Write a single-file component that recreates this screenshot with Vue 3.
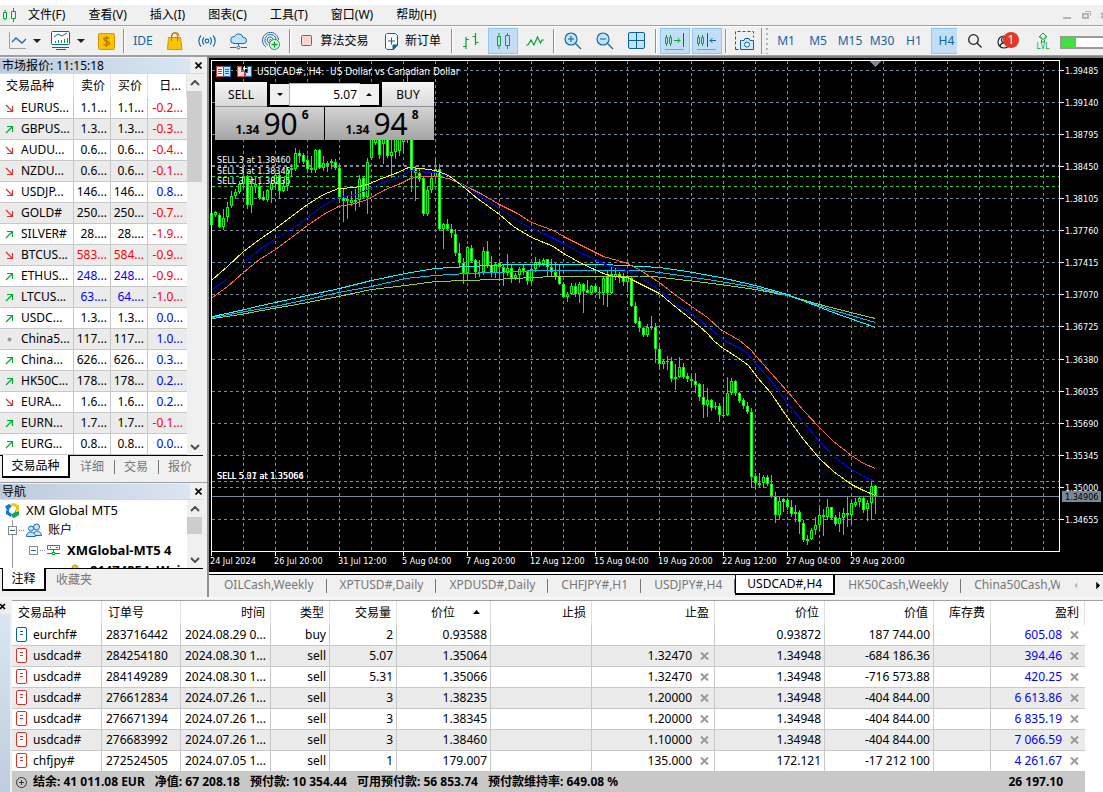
<script setup>
import { computed, ref } from 'vue'

const menus = ['文件(F)', '查看(V)', '插入(I)', '图表(C)', '工具(T)', '窗口(W)', '帮助(H)']
const frames = ['M1', 'M5', 'M15', 'M30', 'H1']

const quotes = [
  ['d', 'EURUS...', '1.1...', '1.1...', '-0.2...', ''],
  ['u', 'GBPUS...', '1.3...', '1.3...', '-0.3...', ''],
  ['d', 'AUDU...', '0.6...', '0.6...', '-0.4...', ''],
  ['d', 'NZDU...', '0.6...', '0.6...', '-0.1...', ''],
  ['d', 'USDJP...', '146...', '146...', '0.8...', ''],
  ['d', 'GOLD#', '250...', '250...', '-0.7...', ''],
  ['u', 'SILVER#', '28....', '28....', '-1.9...', ''],
  ['d', 'BTCUS...', '583...', '584...', '-0.9...', 'red'],
  ['u', 'ETHUS...', '248...', '248...', '-0.9...', 'blue'],
  ['u', 'LTCUS...', '63....', '64....', '-1.0...', 'blue'],
  ['u', 'USDC...', '1.3...', '1.3...', '0.0...', ''],
  ['n', 'China5...', '117...', '117...', '1.0...', ''],
  ['u', 'China...', '626...', '626...', '0.3...', ''],
  ['u', 'HK50C...', '178...', '178...', '0.2...', ''],
  ['d', 'EURA...', '1.6...', '1.6...', '0.2...', ''],
  ['u', 'EURN...', '1.7...', '1.7...', '-0.1...', ''],
  ['u', 'EURG...', '0.8...', '0.8...', '0.0...', '']
]

const orders = [
  ['eurchf#', '283716442', '2024.08.29 0...', 'buy', '2', '0.93588', '', '', '0.93872', '187 744.00', '605.08'],
  ['usdcad#', '284254180', '2024.08.30 1...', 'sell', '5.07', '1.35064', '', '1.32470', '1.34948', '-684 186.36', '394.46'],
  ['usdcad#', '284149289', '2024.08.30 1...', 'sell', '5.31', '1.35066', '', '1.32470', '1.34948', '-716 573.88', '420.25'],
  ['usdcad#', '276612834', '2024.07.26 1...', 'sell', '3', '1.38235', '', '1.20000', '1.34948', '-404 844.00', '6 613.86'],
  ['usdcad#', '276671394', '2024.07.26 1...', 'sell', '3', '1.38345', '', '1.20000', '1.34948', '-404 844.00', '6 835.19'],
  ['usdcad#', '276683992', '2024.07.26 1...', 'sell', '3', '1.38460', '', '1.10000', '1.34948', '-404 844.00', '7 066.59'],
  ['chfjpy#', '272524505', '2024.07.05 1...', 'sell', '1', '179.007', '', '135.000', '172.121', '-17 212 100', '4 261.67']
]
const summary = ['结余: 41 011.08 EUR', '净值: 67 208.18', '预付款: 10 354.44', '可用预付款: 56 853.74', '预付款维持率: 649.08 %']

const chartTabs = ['OILCash,Weekly', 'XPTUSD#,Daily', 'XPDUSD#,Daily', 'CHFJPY#,H1', 'USDJPY#,H4', 'USDCAD#,H4', 'HK50Cash,Weekly', 'China50Cash,Weekly']
const activeTab = ref('USDCAD#,H4')
const volume = ref('5.07')

const gridX = Array.from({ length: 26 }, (_, i) => 243 + i * 32)
const prices = ['1.39485', '1.39140', '1.38795', '1.38450', '1.38105', '1.37760', '1.37415', '1.37070', '1.36725', '1.36380', '1.36035', '1.35690', '1.35345', '1.35000', '1.34655']
  .map((label, i) => ({ label, y: 70 + i * 32 + (i > 8 ? 1 : 0) }))
const dates = ['24 Jul 2024', '26 Jul 20:00', '31 Jul 12:00', '5 Aug 04:00', '7 Aug 20:00', '12 Aug 12:00', '15 Aug 04:00', '19 Aug 20:00', '22 Aug 12:00', '27 Aug 04:00', '29 Aug 20:00']
  .map((label, i) => ({ label, x: 211 + i * 64 }))
const entries = [
  { y: 163, text: 'SELL 3 at 1.38460' },
  { y: 174, text: 'SELL 3 at 1.38345' },
  { y: 184, text: 'SELL 3 at 1.38235' },
  { y: 479, text: 'SELL 5.07 at 1.35064' },
  { y: 479, text: 'SELL 5.31 at 1.35066' }
]

// Each bar: high, body top, body bottom, low, direction, in thirds of a pixel from the block's origin
const blocks = [
  [56, `466,470,508,512,d 465,468,478,482,u 470,478,512,515,d 458,485,512,522,u 438,452,482,498,u 405,420,450,455,u 400,408,420,428,u 375,385,408,415,u 325,362,385,395,u 358,360,448,458,d 360,390,448,470,u 360,385,392,410,u 380,390,425,432,d 405,424,432,436,d 398,402,432,438,u 370,382,402,440,u 350,358,382,398,u 352,358,405,428,d 375,390,405,408,u 335,342,390,405,u 325,335,342,360,u 277,290,338,345,u 282,292,300,320,d 290,296,318,325,d 298,312,338,350,d 300,336,342,350,d 280,283,342,350,u 278,283,335,340,d 300,322,336,345,u 315,322,326,348,u 308,315,322,340,u 310,318,336,342,d 330,335,425,440,d 400,425,435,498,d 420,430,434,490,d 405,432,440,450,u 400,432,438,465,u 358,368,432,452,u 362,366,422,430,d 305,318,422,475,u 220,230,306,312,u 210,230,262,266,u 200,220,296,308,d 200,230,264,325,u 200,220,300,305,d 230,288,300,365,u 200,230,288,310,u 200,230,285,300,u 200,215,258,290,u 50,160,230,262,u 160,180,345,408,d 330,340,352,435,d 335,350,370,378,d 360,365,475,480,d 390,402,475,480,u 350,365,402,412,u 305,340,362,375,u 325,340,520,525,d 500,505,520,580,u 488,505,520,522,d 505,520,530,545,d 520,535,590,600,d 560,590,622,635,d`],
  [130, `385,400,428,462,d 348,352,428,445,u 345,355,392,398,d 388,390,425,445,d 390,425,430,440,u 350,363,425,435,u 333,363,405,415,d 378,405,428,440,d 395,402,428,445,u 395,400,412,452,d 405,412,428,468,d 372,415,428,438,u 405,415,443,458,d 430,436,444,450,u 412,416,436,460,u 405,415,424,434,d 420,424,452,465,d 405,416,452,465,u 380,395,416,425,u 388,395,402,410,u 384,390,402,408,u 388,388,412,438,d 388,412,425,440,d 400,425,438,450,d 405,438,462,466,d 455,462,502,504,d 485,492,502,516,u 458,468,492,495,u 458,468,492,500,d 455,463,492,518,u 458,463,482,548,d 450,480,488,490,d 465,468,488,492,u 458,468,487,490,d 470,486,490,508,d 440,445,490,524,u 420,442,488,530,d 410,432,488,492,u 415,432,440,450,u 425,433,445,460,d 430,442,455,468,d 435,440,455,480,u 438,443,528,530,d 515,528,580,582,d 560,574,595,605,d 590,594,614,622,d 582,590,614,620,u 558,590,593,600,d 580,592,658,698,d 645,658,703,715,d 688,694,703,718,u 678,692,695,720,u 682,694,748,755,d 702,740,748,780,u 680,710,740,745,u 700,710,740,748,d 730,738,748,755,d 730,748,753,770,d 730,753,765,790,d 760,763,802,812,d`],
  [340, `132,170,195,233,d 145,180,195,230,u 178,180,205,212,d 185,198,202,210,d 190,198,226,245,d 170,224,228,232,u 112,158,226,228,u 115,122,158,165,u 120,122,160,168,d 155,160,182,188,d 175,180,198,208,d 185,197,216,222,d 205,216,410,443,d 398,408,428,448,d 400,430,436,442,u 405,410,428,445,u 405,412,432,438,d 405,432,468,475,d 455,468,526,548,d 470,482,526,540,u 475,478,486,515,d 475,480,500,510,d 480,500,522,530,d 495,516,522,545,d 510,515,546,582,d 540,548,600,605,d 585,596,602,614,u 565,570,598,600,u 530,556,570,585,u 505,526,556,572,u 508,526,530,588,d 478,500,530,540,u 500,502,534,540,d 525,532,553,558,d 515,535,553,575,u 505,520,535,585,u 468,520,526,560,d 480,490,526,553,u 475,487,495,502,u 472,475,487,500,u 470,475,510,520,d 480,490,508,543,u 418,438,490,540,u 435,438,468,522,d`]
]
const candles = computed(() => {
  const out = []
  for (const [origin, rows] of blocks) {
    for (const row of rows.split(' ')) {
      const [h, t, b, l, dir] = row.split(',')
      const y = (v) => origin + Math.round(Number(v) / 3)
      out.push({ x: 211 + out.length * 4, h: y(h), t: y(t), b: y(b), l: y(l), fill: dir === 'd' ? '#fff' : '#000' })
    }
  }
  return out
})

const averages = [
  { color: '#9acd32', points: '212,318 240,314 267,309 291,305 307,302 338,296 371,289 405,285 435,281 467,280 493,279 553,276 653,276 687,280 720,284 755,289 787,295 830,307 875,318' },
  { color: '#00bfff', points: '212,317 245,311 279,305 307,299 338,292 371,286 405,278 435,275 467,273 540,270 640,270 659,272 687,276 720,281 755,287 787,295 830,309 875,322' },
  { color: '#00ffff', points: '212,316 240,310 261,305 307,295 339,288 371,280 405,273 435,268 467,266 513,264 603,264 642,266 659,267 687,271 720,277 755,285 787,294 830,311 875,327' },
  { color: '#ff6347', points: '212,297 227,286 243,272 259,259 275,249 291,237 307,225 323,214 338,206 355,203 367,199 385,189 398,184 410,178 421,176 435,176 448,178 460,183 480,193 499,204 517,213 531,222 553,230 563,236 583,246 603,256 617,260 627,263 640,270 659,282 673,293 691,306 707,317 720,329 739,340 750,349 763,364 787,391 803,410 819,427 833,441 851,455 863,463 875,468' },
  { color: '#0000ff', points: '212,289 227,278 243,262 259,249 275,238 295,226 311,214 323,205 338,197 355,194 368,189 385,181 398,177 410,170 428,172 438,172 451,177 460,183 470,189 499,208 523,224 543,233 563,243 583,254 595,259 607,265 627,270 640,277 659,290 673,302 691,313 707,326 724,340 740,348 748,354 757,365 773,383 787,403 803,422 819,441 833,456 851,469 867,478 875,481' },
  { color: '#ffff00', points: '212,279 227,266 243,251 259,239 275,228 291,216 307,204 323,194 338,188 355,187 367,184 381,178 395,173 408,167 421,168 435,170 448,175 460,184 477,198 499,214 513,226 531,237 553,246 563,253 583,264 603,273 613,276 627,277 637,282 659,293 677,308 691,319 707,333 714,341 723,348 737,357 748,365 757,377 770,392 787,417 803,439 819,458 833,471 851,484 863,490 875,495' }
]
</script>

<template>
  <div class="app">
    <header>
      <nav class="menubar">
        <svg width="14" height="14" viewBox="0 0 14 14" fill="none" stroke="#00a82d"><path d="M1.500 4.500h3v6h-3zM3 2v2.500M3 10.500v2M9.500 3.500h4v7h-4zM11.500 0v3.500M11.500 10.500V14" /></svg>
        <button v-for="m in menus" :key="m" type="button">{{ m }}</button>
        <span class="wincontrols">
          <svg width="40" height="14" viewBox="0 0 40 14" fill="none" stroke="#b4b4b4" stroke-width="2"><path d="M0 10h8" /><path d="M20 6h5v4h-5z" /><path d="M22 3.500h5.500V8" stroke-width="1" /><path d="M38 5l5 5M43 5l-5 5" /></svg>
        </span>
      </nav>
      <div class="toolbar" role="toolbar">
        <button class="t-line" type="button" aria-label="Line"><svg width="18" height="18" viewBox="0 0 18 18" fill="none"><path d="M.5 0v16.500H17" stroke="#a0a0a0" /><path d="M3 10l4-4 6 5 4-4" stroke="#1b6ca8" stroke-width="1.300" /></svg></button>
        <button class="t-caret" type="button" aria-label="More"><svg width="8" height="4" viewBox="0 0 8 4"><path d="M0 0h8L4 4z" fill="#222" /></svg></button>
        <button class="t-template" type="button" aria-label="Indicators"><svg width="20" height="20" viewBox="0 0 20 20" fill="none" stroke="#0a62a0"><rect x=".5" y=".5" width="18" height="13" rx="1" fill="#fff" /><path d="M3 6l4-3 4 2 5-3" /><path d="M4.500 12v-2M7.500 12V9M10.500 12v-3M13.500 12V8M16.500 12V7" stroke="#00a82d" /><path d="M1 16.500h17M5 18.500h10" /></svg></button>
        <button class="t-caret" type="button" aria-label="More"><svg width="8" height="4" viewBox="0 0 8 4"><path d="M0 0h8L4 4z" fill="#222" /></svg></button>
        <button class="t-dollar" type="button" aria-label="Currency"><svg width="17" height="17" viewBox="0 0 17 17" fill="none"><rect x=".5" y=".5" width="16" height="16" rx="1" fill="#fcc400" stroke="#cf960a" /><path d="M11.500 5.500c-1-1-5.500-1.300-5.500.8 0 2.200 5.500 1.700 5.500 4 0 2.200-4.500 2.200-6 .9M8.500 3v11" stroke="#b87c00" stroke-width="1.500" /></svg></button>
        <i class="sep"></i>
        <button class="tool txt" type="button">IDE</button>
        <button class="tool" type="button" aria-label="Market"><svg width="16" height="18" viewBox="0 0 16 18" fill="none"><path d="M1.500 5.500h12l1.500 12H.500z" fill="#fcc400" stroke="#cf960a" /><path d="M4.500 9V4a3 3 0 016 0v5M5 4a3 3 0 017 0" stroke="#b07600" /></svg></button>
        <button class="tool" type="button" aria-label="Signals"><svg width="18" height="14" viewBox="0 0 18 14" fill="none" stroke="#1b6ca8" stroke-width="1.200"><circle cx="9" cy="7" r="1.800" /><path d="M6 3.500a5 5 0 000 7M12 3.500a5 5 0 010 7M3 1.500a8 8 0 000 11M15 1.500a8 8 0 010 11" /></svg></button>
        <button class="tool" type="button" aria-label="VPS"><svg width="18" height="18" viewBox="0 0 18 18" stroke="#1b6ca8" fill="none"><path d="M4 11.500a3.500 3.500 0 01.500-7 4.500 4.500 0 018.500 1 3 3 0 011 6z" fill="#bfe3fb" /><path d="M0 15.500h6M11 15.500h6M8.500 12v2" /><circle cx="8.500" cy="15.500" r="1.500" /></svg></button>
        <button class="tool" type="button" aria-label="Community"><svg width="19" height="19" viewBox="0 0 19 19" fill="none" stroke="#1b6ca8"><path d="M4 15A8 8 0 1116.500 8M6 13a5.500 5.500 0 118-5M8 11a3 3 0 113-4" /><circle cx="8.500" cy="8.500" r="1" /><circle cx="12.500" cy="12.500" r="5" fill="#e4fbe7" stroke="#00a82d" /><path d="M12.500 9.500v6M9.500 12.500h6" stroke="#00a82d" stroke-width="1.400" /></svg></button>
        <i class="sep"></i>
        <button class="t-algo" type="button"><svg width="12" height="12" viewBox="0 0 12 12"><rect x=".5" y=".5" width="10" height="10" rx="1" fill="#ffd5cf" stroke="#d83a35" /></svg>算法交易</button>
        <button class="t-order" type="button"><svg width="13" height="17" viewBox="0 0 13 17" fill="none" stroke="#0a62a0"><path d="M2 .5h8.500l2 2V12l-4 4.500H2L.5 15V2z" fill="#fff" /><path d="M8 16.500V12h4.500z" fill="#0a62a0" /><path d="M6.500 4.500v7M3 8h7" /></svg>新订单</button>
        <i class="sep"></i>
        <button class="tool" type="button" aria-label="Bars"><svg width="18" height="18" viewBox="0 0 18 18" fill="none" stroke="#00a82d" stroke-width="1.200"><path d="M4 5v12M4 7.500h3M1 14.500h3M13.500 1v12M10.500 4.500h3M13.500 10.500h3" /></svg></button>
        <button class="tool on" type="button" aria-label="Candles"><svg width="14" height="18" viewBox="0 0 14 18" fill="none" stroke="#00a82d"><path d="M1.500 4.500h3v9h-3zM3 1v3.500M3 13.500V17M9.500 3.500h4v10h-4zM11.500 1v2.500M11.500 13.500V17" /></svg></button>
        <button class="tool" type="button" aria-label="Line chart"><svg width="18" height="14" viewBox="0 0 18 14" fill="none" stroke="#00a82d" stroke-width="1.200"><path d="M0 11h2l3-5 3 5 3.500-8 3 6 1.500-3h2" /></svg></button>
        <i class="sep"></i>
        <button class="tool" type="button" aria-label="Zoom in"><svg width="18" height="18" viewBox="0 0 18 18" fill="none" stroke="#0a62a0" stroke-width="1.100"><circle cx="7" cy="7" r="6" fill="#bfe3fb" /><path d="M11.500 11.500L17 17M4 7h6M7 4v6" /></svg></button>
        <button class="tool" type="button" aria-label="Zoom out"><svg width="18" height="18" viewBox="0 0 18 18" fill="none" stroke="#0a62a0" stroke-width="1.100"><circle cx="7" cy="7" r="6" fill="#bfe3fb" /><path d="M11.500 11.500L17 17M4 7h6" /></svg></button>
        <button class="tool" type="button" aria-label="Tile"><svg width="18" height="18" viewBox="0 0 18 18" fill="none" stroke="#0a62a0"><rect x=".5" y=".5" width="16" height="16" rx="1.500" fill="#bfe3fb" /><path d="M8.500 0v17M0 8.500h17" /></svg></button>
        <i class="sep"></i>
        <button class="tool on" type="button" aria-label="Auto scroll"><svg width="20" height="18" viewBox="0 0 20 18" fill="none"><path d="M.5 5.500h2v6h-2zM1.500 3v2.500M1.500 11.500V14M4.500 5.500h2v6h-2zM5.500 3v2.500M5.500 11.500V14M9 8.500h6M12.500 6l2.500 2.500-2.500 2.500" stroke="#00a82d" /><path d="M18.500 1v14" stroke="#0a62a0" /><path d="M0 17.500h19" stroke="#999" /></svg></button>
        <button class="tool on" type="button" aria-label="Shift"><svg width="20" height="18" viewBox="0 0 20 18" fill="none"><path d="M.5 5.500h2v6h-2zM1.500 3v2.500M1.500 11.500V14M4.500 5.500h2v6h-2zM5.500 3v2.500M5.500 11.500V14" stroke="#00a82d" /><path d="M10.500 1v14M13 8.500h6M15.500 6L13 8.500l2.500 2.500" stroke="#0a62a0" /><path d="M0 17.500h19" stroke="#999" /></svg></button>
        <i class="sep"></i>
        <button class="tool" type="button" aria-label="Screenshot"><svg width="20" height="20" viewBox="0 0 20 20" fill="none" stroke="#0a62a0"><path d="M.5 18.500V.5h18v6M.5 18.500h4" stroke-dasharray="3 2" /><path d="M6.500 9.500h2.500l1-2h4l1 2h3.500v9h-13v-9z" fill="#cfe9fb" /><circle cx="12" cy="13.500" r="2.500" fill="#fff" /></svg></button>
        <i class="grip"></i>
        <button v-for="f in frames" :key="f" class="tool txt" type="button">{{ f }}</button>
        <button class="tool txt on h4" type="button">H4</button>
        <button class="t-wide" type="button" aria-label="Search"><svg width="14" height="14" viewBox="0 0 14 14" fill="none" stroke="#222" stroke-width="1.300"><circle cx="5.500" cy="5.500" r="4.800" /><path d="M9 9l4.500 4.500" /></svg></button>
        <button class="t-wide" type="button" aria-label="Profile"><svg width="24" height="18" viewBox="0 0 24 18"><g fill="none" stroke="#222" stroke-width="1.200"><circle cx="7" cy="10" r="6" /><circle cx="7" cy="8" r="2.500" /><path d="M3 14c1-4 7-4 8 0" /></g><circle cx="14" cy="8" r="8" fill="#e23a22" /><text x="14" y="12" text-anchor="middle" fill="#fff" font-size="12">1</text></svg></button>
        <button class="t-wide" type="button" aria-label="Level"><svg width="14" height="18" viewBox="0 0 14 18"><path d="M3 5l4-4 4 4H9v2H5V5zM5.500 8v2h3V8" fill="none" stroke="#00a82d" /><text x="7" y="17" text-anchor="middle" fill="#00a82d" font-size="8">LVL</text></svg></button>
        <div class="meter"><i></i></div>
      </div>
    </header>

    <main>
      <aside>
        <section class="panel">
          <div class="ptitle"><span>市场报价: 11:15:18</span><button type="button" aria-label="Close"><svg width="7" height="7" viewBox="0 0 7 7" stroke="#000" stroke-width="1.600"><path d="M.5.5l6 6M6.500.5l-6 6" /></svg></button></div>
          <div class="scrollrow">
            <table class="quotes">
              <colgroup><col class="q0" /><col class="q1" /><col class="q1" /><col /></colgroup>
              <thead><tr><th class="l">交易品种</th><th>卖价</th><th>买价</th><th>日...</th></tr></thead>
              <tbody>
                <tr v-for="q in quotes" :key="q[1]">
                  <td class="l">
                    <svg width="9" height="9" viewBox="0 0 9 9" fill="none" stroke-width="1.200">
                      <path v-if="q[0] === 'u'" d="M1 8l6-6M2 1.500h5.500V7" stroke="#00a82d" />
                      <path v-else-if="q[0] === 'd'" d="M1 1l6 6M7.500 2v5.500H2" stroke="#d8322c" />
                      <circle v-else cx="4.500" cy="4.500" r="2" fill="#999" />
                    </svg>{{ q[1] }}
                  </td>
                  <td :class="q[5]">{{ q[2] }}</td>
                  <td :class="q[5]">{{ q[3] }}</td>
                  <td :class="q[4][0] === '-' ? 'red' : 'blue'">{{ q[4] }}</td>
                </tr>
              </tbody>
            </table>
            <div class="sbar">
              <svg width="10" height="6" viewBox="0 0 10 6" fill="none" stroke="#505050" stroke-width="2"><path d="M1 5l4-4 4 4" /></svg>
              <i class="thumb tall"></i>
              <svg class="down" width="10" height="6" viewBox="0 0 10 6" fill="none" stroke="#505050" stroke-width="2"><path d="M1 1l4 4 4-4" /></svg>
            </div>
          </div>
          <div class="ptabs"><button class="sel w68" type="button">交易品种</button><button type="button">详细</button><button type="button">交易</button><button type="button">报价</button></div>
        </section>
        <section class="panel nav">
          <div class="ptitle"><span>导航</span><button type="button" aria-label="Close"><svg width="7" height="7" viewBox="0 0 7 7" stroke="#000" stroke-width="1.600"><path d="M.5.5l6 6M6.500.5l-6 6" /></svg></button></div>
          <div class="scrollrow navrow">
            <ul class="tree">
              <li><svg width="15" height="15" viewBox="0 0 15 15"><path d="M0 3.500L4 1l3 2-3 3v3l3 2-1 3-5-3V8l1-1z" fill="#1473e6" /><path d="M5 1l4-1 5 2.500V7l-3 1.500V4L8 3z" fill="#fbc400" /><path d="M14 8v4l-5 3-2-1v-3l3-2V6l1 3z" fill="#17a84a" /></svg><span class="root">XM Global MT5</span></li>
              <li class="lv1"><i class="minus"></i><i class="dots"></i><svg width="16" height="15" viewBox="0 0 16 15" fill="#bfe3fb" stroke="#1b6ca8"><circle cx="10.500" cy="4" r="3" /><path d="M7 12.500c0-6 8-6 8.500 0z" /><circle cx="5" cy="5.500" r="2.500" /><path d="M.5 13.500c0-6 8.500-6 9 0z" /></svg><span>账户</span></li>
              <li class="lv2"><i class="minus"></i><i class="dots"></i><svg width="14" height="12" viewBox="0 0 14 12" fill="none" stroke="#00a82d"><path d="M.5 1.500h12v4H.5zM3 3.500h1M9 3.500h2M6.500 5.500V9M0 9.500h5M8 9.500h5M5 8.500h3v2H5z" /></svg><b>XMGlobal-MT5 4</b></li>
              <li class="lv3"><svg width="10" height="12" viewBox="0 0 10 12" fill="#fcc400" stroke="#cf960a"><circle cx="5" cy="4" r="3" /><path d="M.5 11.500c0-5 9-5 9 0z" /></svg><b>81474354: Weigu</b></li>
            </ul>
            <div class="sbar">
              <svg width="10" height="6" viewBox="0 0 10 6" fill="none" stroke="#505050" stroke-width="2"><path d="M1 5l4-4 4 4" /></svg>
              <i class="thumb short"></i>
              <svg class="down" width="10" height="6" viewBox="0 0 10 6" fill="none" stroke="#505050" stroke-width="2"><path d="M1 1l4 4 4-4" /></svg>
            </div>
          </div>
          <div class="ptabs"><button class="sel w44" type="button">注释</button><button type="button">收藏夹</button></div>
        </section>
      </aside>

      <section class="work">
        <div class="chart">
          <svg class="plot" viewBox="209 58 894 514" shape-rendering="crispEdges" role="img" aria-label="USDCAD#, H4">
            <g fill="none" stroke="#778899" stroke-dasharray="3 3">
              <path v-for="x in gridX" :key="x" :d="`M${x}.5 61V551`" />
              <path v-for="p in prices" :key="p.y" :d="`M212 ${p.y}.5H1059`" />
            </g>
            <path d="M212 165.500H1059M212 176.500H1059M212 186.500H1059M212 481.500H1059" fill="none" stroke="#32cd32" stroke-dasharray="3 3" />
            <g v-for="c in candles" :key="c.x">
              <rect :x="c.x" :y="c.h" width="1" :height="c.l - c.h" fill="#00ff00" />
              <rect :x="c.x - 1" :y="c.t" width="3" :height="Math.max(1, c.b - c.t)" fill="#00ff00" />
              <rect :x="c.x" :y="c.t + 1" width="1" :height="Math.max(0, c.b - c.t - 2)" :fill="c.fill" />
            </g>
            <g transform="translate(.5 .5)" fill="none">
              <polyline v-for="a in averages" :key="a.color" :points="a.points" :stroke="a.color" />
            </g>
            <path d="M212 496.500H1059" stroke="#778899" />
            <path d="M211.500 60V551.500H1059.500V60.500H211" fill="none" stroke="#fff" />
            <path d="M870 61h11l-5 6h-1z" fill="#778899" />
            <g stroke="#fff">
              <path v-for="p in prices" :key="p.label" :d="`M1060 ${p.y}.5h4`" />
              <path v-for="d in dates" :key="d.x" :d="`M${d.x}.5 552v4`" />
            </g>
            <rect x="1062" y="491" width="39" height="11" fill="#778899" />
            <g class="labels">
              <text v-for="p in prices" :key="p.label" x="1065" :y="p.y + 4">{{ p.label }}</text>
              <text x="1065" y="500" class="dark">1.34906</text>
              <text v-for="d in dates" :key="d.label" :x="d.x - 1" y="564">{{ d.label }}</text>
              <text v-for="e in entries" :key="e.text" x="217" :y="e.y">{{ e.text }}</text>
              <text x="257" y="75" class="caption">USDCAD#, H4:&nbsp; US Dollar vs Canadian Dollar</text>
            </g>
            <g fill="none">
              <rect x="216.500" y="66.500" width="14" height="10" fill="#fff" stroke="#d83a35" />
              <path d="M223.500 66.500h7v10h-7z" fill="#bfe3fb" stroke="#1b6ca8" /><path d="M218 69.500h4M218 71.500h4M218 73.500h4" stroke="#d83a35" /><path d="M225 69.500h4M225 71.500h4M225 73.500h4" stroke="#1b6ca8" />
              <path d="M237.500 66.500h4v5h3v5h-7z" fill="#ffd5cf" stroke="#d83a35" /><path d="M247.500 66.500h4v10h-6v-4h2z" fill="#bfe3fb" stroke="#1b6ca8" /><path d="M243 68.500h4M244.500 66v4" stroke="#fff" />
            </g>
          </svg>
          <div class="oneclick">
            <button class="side" type="button">SELL</button>
            <div class="vol">
              <button type="button" aria-label="Decrease"><svg width="6" height="3" viewBox="0 0 6 3"><path d="M0 0h6L3 3z" /></svg></button>
              <input v-model="volume" aria-label="Volume" />
              <button type="button" aria-label="Increase"><svg width="6" height="3" viewBox="0 0 6 3"><path d="M0 3h6L3 0z" /></svg></button>
            </div>
            <button class="side" type="button">BUY</button>
            <div class="price"><b>1.34</b><span>90</span><sup>6</sup></div>
            <div class="price"><b>1.34</b><span>94</span><sup>8</sup></div>
          </div>
        </div>
        <div class="ctabs">
          <div class="clist"><button v-for="t in chartTabs" :key="t" type="button" :class="{ sel: t === activeTab }" @click="activeTab = t">{{ t }}</button></div>
          <svg width="43" height="21" viewBox="0 0 43 21"><path d="M17 8v6l-3-3z" fill="#b4b4b4" /><path d="M37 7v8l4-4z" /></svg>
        </div>
      </section>
    </main>

    <section class="terminal">
      <div class="strip"><button type="button" aria-label="Close"><svg width="6" height="7" viewBox="0 0 6 7" stroke="#000" stroke-width="1.600"><path d="M0 1l5 5M5 1L0 6" /></svg></button></div>
      <div class="tablebox">
        <table class="trades">
          <colgroup><col class="c0" /><col class="c1" /><col class="c0" /><col class="c3" /><col class="c4" /><col class="c5" /><col class="c6" /><col class="c7" /><col class="c8" /><col class="c9" /><col class="c10" /><col class="c5" /></colgroup>
          <thead>
            <tr><th class="l">交易品种</th><th class="l">订单号</th><th>时间</th><th>类型</th><th>交易量</th><th class="sorted">价位<svg width="7" height="4" viewBox="0 0 7 4"><path d="M0 4h7L3.500 0z" /></svg></th><th>止损</th><th>止盈</th><th>价位</th><th>价值</th><th>库存费</th><th>盈利</th></tr>
          </thead>
          <tbody>
            <tr v-for="o in orders" :key="o[1]">
              <td class="l sym"><svg width="11" height="15" viewBox="0 0 11 15" fill="#fff" :stroke="o[3] === 'buy' ? '#0a62a0' : '#d8322c'"><rect x=".5" y=".5" width="10" height="14" rx="1.500" /><path d="M4 4.500h3M4 7.500h3" /></svg>{{ o[0] }}</td>
              <td class="l num">{{ o[1] }}</td><td class="l time">{{ o[2] }}</td><td>{{ o[3] }}</td><td>{{ o[4] }}</td><td>{{ o[5] }}</td><td>{{ o[6] }}</td>
              <td><template v-if="o[7]">{{ o[7] }}<svg class="x" width="9" height="8" viewBox="0 0 9 8" stroke="#999" stroke-width="2"><path d="M1 .5l7 7M8 .5l-7 7" /></svg></template></td>
              <td>{{ o[8] }}</td><td>{{ o[9] }}</td><td></td>
              <td class="blue">{{ o[10] }}<svg class="x" width="9" height="8" viewBox="0 0 9 8" stroke="#999" stroke-width="2"><path d="M1 .5l7 7M8 .5l-7 7" /></svg></td>
            </tr>
          </tbody>
          <tfoot>
            <tr><td class="l" colspan="10"><div class="sum"><svg width="11" height="11" viewBox="0 0 11 11" fill="none" stroke="#333"><circle cx="5.500" cy="5.500" r="5" /><path d="M3 5.500h5M5.500 3v5" /></svg><span v-for="s in summary" :key="s">{{ s }}</span></div></td><td class="total" colspan="2">26 197.10</td></tr>
          </tfoot>
        </table>
      </div>
    </section>
  </div>
</template>

<style>
body { background: #fff; }
</style>

<style scoped>
.app { min-height: 100vh; display: flex; flex-direction: column; background: #f0f0f0; color: #000; font: 12px/16px "Noto Sans", "Noto Sans CJK SC", sans-serif; overflow: hidden; }
.app, .app * { box-sizing: border-box; }
button { border: 0; background: none; padding: 0; margin: 0; font: inherit; color: inherit; display: flex; align-items: center; justify-content: center; white-space: nowrap; }
svg { display: block; flex: none; }
header { border-top: 5px solid #fff; }
.menubar { display: flex; align-items: center; height: 20px; padding-left: 2px; }
.menubar button { padding: 0 11px 0 12px; }
.wincontrols { margin-left: auto; }
.toolbar { display: flex; align-items: stretch; height: 31px; border-top: 1px solid #a0a0a0; border-bottom: 1px solid #a0a0a0; box-shadow: inset 0 1px #fff; padding: 2px 0 1px 4px; overflow: hidden; }
.toolbar > * { flex: none; }
.t-line { width: 27px; }
.t-caret { width: 11px; }
.t-template { width: 29px; margin-left: 4px; }
.t-dollar { width: 30px; margin-left: 5px; }
.sep { width: 2px; margin: 1px 2px; background: #909090; background-clip: content-box; border-right: 1px solid #fff; }
.tool { width: 30px; margin: 0 1px; }
.txt { color: #1464a0; }
.on { background: #c3def4; border: 1px solid #90c8f6; }
.h4 { width: 26px; border-right: 0; padding-left: 4px; }
.t-algo { width: 84px; gap: 7px; }
.t-order { width: 72px; gap: 7px; }
.grip { width: 9px; border-left: 1px solid #909090; background: repeating-linear-gradient(#b4b4b4 0 2px, #f0f0f0 2px 5px) 4px 0 / 2px 100% no-repeat; }
.t-wide { width: 34px; }
.meter { flex: 1 1 20px; margin: 8px 0 5px; border: 1px solid #999; border-width: 2px 0 2px 1px; background: #fff; min-width: 20px; }
.meter i { display: block; width: 15px; height: 100%; background: #40e040; }

main { display: grid; grid-template-columns: 207px minmax(0, 1fr); }
aside { border-top: 1px solid #a0a0a0; display: flex; flex-direction: column; background: #f0f0f0; }
.panel { padding: 1px 3px 0 0; }
.ptitle { display: flex; align-items: center; height: 15px; background: linear-gradient(90deg, #bccbdc, #d9e5f3 190px, #f0f0f0 190px); padding: 0 2px; justify-content: space-between; line-height: 15px; }
.ptitle button { width: 8px; }
.scrollrow { display: flex; background: #fff; border-top: 1px solid #d8d8d8; }
table { border-collapse: separate; border-spacing: 0; table-layout: fixed; }
th { font-weight: 400; height: 24px; padding: 0; text-align: right; border-right: 1px solid #e0e0e0; }
td { height: 21px; padding: 0; text-align: right; white-space: nowrap; overflow: hidden; border-right: 1px solid #c8c8c8; border-bottom: 1px solid #c8c8c8; line-height: 16px; }
tbody tr:nth-child(even) { background: #ebebeb; }
.l { text-align: left; }
.quotes { width: 187px; }
.q0 { width: 74px; }
.q1 { width: 37px; }
.quotes th, .quotes td { padding-right: 3px; }
.quotes th { padding-right: 5px; }
.quotes td:last-child { border-right: 0; padding-right: 4px; }
.quotes .l { padding-left: 6px; padding-right: 0; }
.quotes td.l { padding-left: 5px; }
.quotes td.l svg { display: inline-block; margin-right: 7px; vertical-align: -1px; }
.red { color: #f00; }
.blue { color: #00f; }
.sbar { flex: 1; background: #f0f0f0; display: flex; flex-direction: column; align-items: center; padding: 6px 2px 5px 0; }
.thumb { width: 15px; background: #cdcdcd; margin-top: 5px; }
.tall { height: 91px; }
.short { height: 17px; }
.down { margin-top: auto; }
.ptabs { display: flex; height: 27px; border-top: 1px solid #000; background: #f0f0f0; color: #777; margin-right: 1px; padding-left: 2px; align-items: flex-start; }
.ptabs button { height: 21px; width: 44px; }
.ptabs button + button + button { background: linear-gradient(#777, #777) 0 4px / 1px 14px no-repeat; }
.ptabs .sel { background: #fff; color: #000; border: 1px solid #000; border-width: 0 2px 2px 1px; margin-top: -1px; height: 23px; }
.ptabs .w68 { width: 68px; }
.ptabs .w44 { width: 44px; }
.ptabs .w44 + button { width: 56px; }
.nav { border-top: 1px solid #a0a0a0; flex: 1; }
.navrow { height: 69px; overflow: hidden; }
.tree { width: 187px; flex: none; list-style: none; margin: 0; padding: 0 0 0 5px; overflow: hidden; background: linear-gradient(#999, #999) 12px 20px / 1px 100% no-repeat; }
.tree li { display: flex; align-items: center; height: 20px; gap: 6px; white-space: nowrap; }
.tree .root, .tree b { font-size: 13px; }
.tree .lv1 { padding-left: 3px; gap: 2px; }
.tree .lv2 { padding-left: 24px; gap: 2px; }
.tree .lv3 { padding-left: 65px; gap: 10px; }
.lv1 span, .lv2 b { margin-left: 4px; }
.minus { width: 9px; height: 9px; border: 1px solid #888; background: linear-gradient(#2a5caa, #2a5caa) 1px 3px / 5px 1px no-repeat #fff; }
.dots { width: 5px; border-top: 1px dotted #888; }

.work { border-left: 2px solid #909090; border-top: 2px solid #808080; min-width: 0; display: flex; flex-direction: column; }
.chart { position: relative; background: #000; color: #fff; }
.plot { width: 100%; height: auto; }
.labels { fill: #fff; font: 9px "DejaVu Sans Condensed", "DejaVu Sans", sans-serif; }
.labels .dark { fill: #000; }
.labels .caption { font-size: 10px; }
.oneclick { position: absolute; left: 6px; top: 24px; width: 219px; display: grid; grid-template-columns: 52px 115px 52px; grid-template-rows: 25px 33px; background: #000; color: #000; }
.side { background: linear-gradient(#f4f4f4, #d8d8d8); border-top: 1px solid #fff; box-shadow: inset 0 -1px #909090; }
.vol { display: flex; margin: 2px 3px; background: #fff; }
.vol button { width: 20px; background: #f0f0f0; }
.vol input { flex: 1; min-width: 0; border: 0; padding: 0 2px; text-align: right; font: inherit; outline: 1px solid #b0b0b0; }
.price { grid-row: 2; display: flex; align-items: flex-end; justify-content: center; gap: 4px; width: 109px; padding-left: 5px; background: linear-gradient(#d4d4d4, #a4a4a4); line-height: 16px; }
.price:last-child { grid-column: 2 / 4; justify-self: end; }
.price b { margin-bottom: 2px; }
.price span { font-size: 30px; line-height: 32px; }
.price sup { font-weight: 700; font-size: 12px; align-self: flex-start; line-height: 16px; vertical-align: baseline; }
.ctabs { display: flex; height: 25px; background: #f0f0f0; border-top: 2px solid #fff; color: #777; }
.clist { flex: 1; min-width: 0; overflow: hidden; display: flex; border-top: 1px solid #000; height: 21px; padding-left: 2px; }
.ctabs > svg { border-top: 1px solid #000; }
.clist button { padding: 0 13px; flex: none; background: linear-gradient(#777, #777) 100% 4px / 1px 14px no-repeat; }
.clist .sel { background: #fff; color: #000; border: 1px solid #000; border-width: 0 2px 2px 1px; padding: 0 11px; }

.terminal { flex: 1; display: flex; border-top: 2px solid #f8f8f8; padding-top: 1px; }
.strip { width: 10px; margin-right: 2px; background: linear-gradient(#d9e5f3, #bccbdc) 0 14px no-repeat; }
.strip button { width: 6px; height: 12px; }
.tablebox { flex: 1; background: #fff; border-top: 1px solid #a0a0a0; min-width: 0; }
.trades { width: 1073px; }
.c0 { width: 90px; }
.c1 { width: 79px; }
.c3 { width: 59px; }
.c4 { width: 67px; }
.c5 { width: 94px; }
.c6 { width: 101px; }
.c7 { width: 123px; }
.c8 { width: 110px; }
.c9 { width: 109px; }
.c10 { width: 57px; }
.trades td { padding-right: 3px; }
.trades th { padding-right: 5px; }
.trades th.l { padding-left: 6px; }
.trades .sym { padding-left: 4px; }
.trades td.num, .trades td.time { padding-left: 4px; }
.trades .sym svg { display: inline-block; vertical-align: -3px; margin-right: 6px; }
.trades .x { display: inline-block; margin: 0 2px 0 8px; }
.trades tbody td:last-child { border-right: 0; padding-right: 4px; }
.sorted svg { display: inline-block; margin: 0 5px 3px 18px; }
.trades tfoot td { background: #c8c8c8; font-weight: 700; border: 0; height: 20px; }
.trades tfoot .l { padding-left: 4px; }
.sum { display: flex; align-items: center; gap: 10px; }
.sum svg { margin-right: -4px; }
.trades tfoot .total { padding-right: 22px; }
</style>
